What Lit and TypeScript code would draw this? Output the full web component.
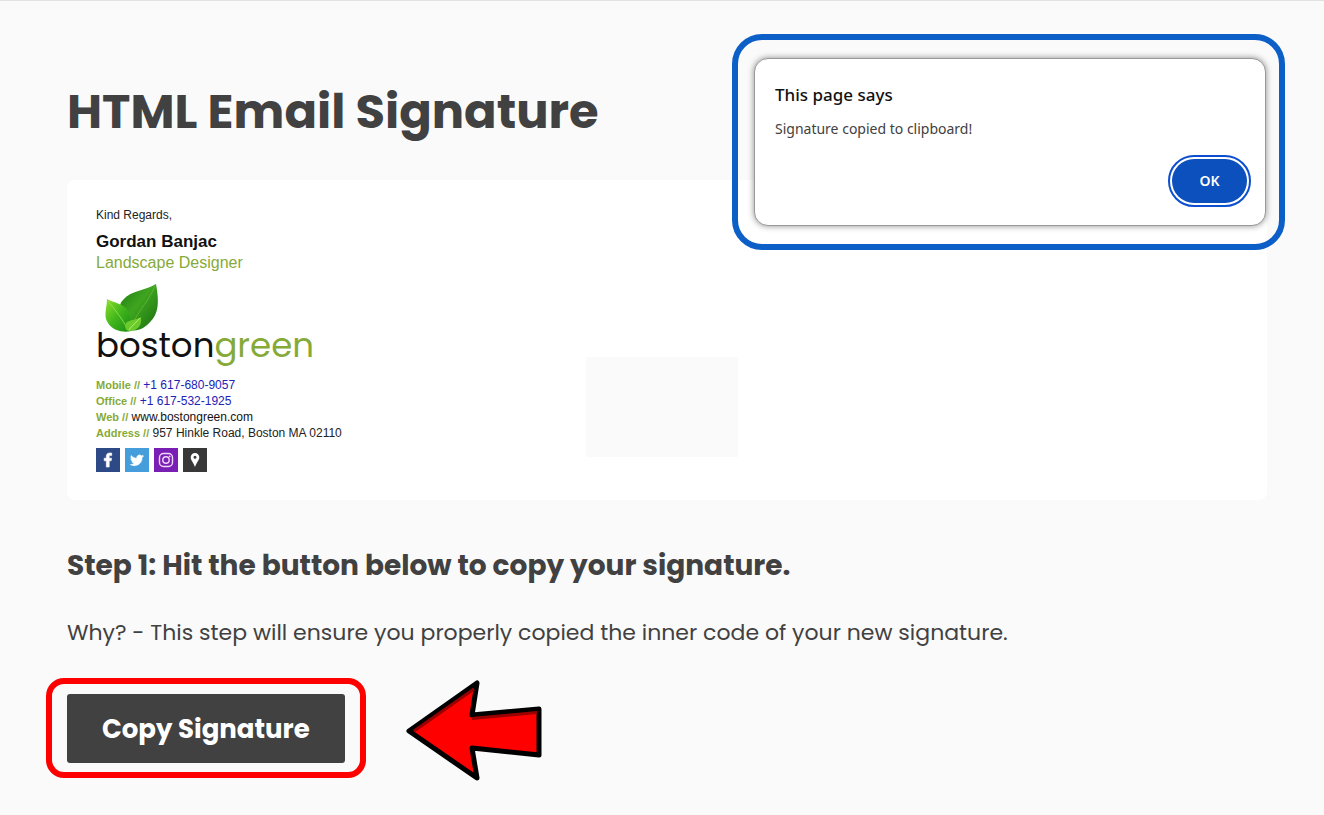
import { LitElement, html, css } from "lit";
import { customElement, state } from "lit/decorators.js";

@customElement("email-signature")
class EmailSignature extends LitElement {
  static styles = css`
    :host {
      display: block;
      font-family: "Liberation Sans", Arial, sans-serif;
      font-size: 12px;
      line-height: 16px;
      color: #222;
    }
    p {
      margin: 0;
    }
    .regards {
      margin-bottom: 8px;
    }
    .name,
    .role {
      font-size: 17px;
      line-height: 21px;
    }
    .name {
      font-weight: 700;
      color: #111;
    }
    .role {
      font-size: 16px;
    }
    .role,
    .label {
      color: #86aa38;
    }
    .logo {
      display: flex;
      flex-direction: column;
      margin: 10px 0 12px;
    }
    .leaves {
      display: block;
      width: 56px;
      height: 50px;
      margin-left: 6px;
    }
    .brand {
      font-family: Poppins, Inter, sans-serif;
      font-size: 34px;
      font-weight: 400;
      line-height: 40px;
      margin-top: -8px;
      color: #111;
    }
    .brand span {
      color: #86aa38;
    }
    .label {
      font-size: 11px;
      font-weight: 700;
    }
    a {
      color: #111;
      text-decoration: none;
    }
    .phone {
      color: #2222b8;
    }
    .social {
      display: flex;
      gap: 5px;
      margin-top: 7px;
    }
    .social svg {
      display: block;
      width: 24px;
      height: 24px;
    }
  `;

  render() {
    return html`
      <p class="regards">Kind Regards,</p>
      <p class="name">Gordan Banjac</p>
      <p class="role">Landscape Designer</p>
      <div class="logo">
        <svg class="leaves" viewBox="0 0 56 50" aria-hidden="true">
          <defs>
            <linearGradient id="big" x1="0" y1="0" x2="1" y2="1">
              <stop offset="0" stop-color="#1d7a12" />
              <stop offset="0.45" stop-color="#3fa51f" />
              <stop offset="1" stop-color="#176c10" />
            </linearGradient>
            <linearGradient id="mid" x1="0" y1="0" x2="1" y2="1">
              <stop offset="0" stop-color="#8ee02a" />
              <stop offset="0.5" stop-color="#3fb51c" />
              <stop offset="1" stop-color="#1c8c12" />
            </linearGradient>
          </defs>
          <path d="M54 1C57 17 57 30 49 38C43 45 36 49 28 47C21 37 14 23 21 17C29 7 43 8 54 1Z" fill="url(#big)" />
          <path d="M53 3C47 17 38 26 29 43" fill="none" stroke="#6fbb3b" stroke-width="0.7" />
          <path d="M5 16C14 21 27 21 28 34L29 48C22 50 11 48 6 40C1 33 5 25 5 16Z" fill="url(#mid)" />
          <path d="M6 18C13 27 20 35 26 47" fill="none" stroke="#a3e05a" stroke-width="0.8" />
          <path d="M39 34C33 38 25 36 23 42C23 46 25 48 28 48C36 47 40 43 39 34Z" fill="#6ccb2c" />
          <path d="M38 35C34 40 30 42 27 47" fill="none" stroke="#c5f387" stroke-width="0.8" />
        </svg>
        <div class="brand">boston<span>green</span></div>
      </div>
      <div class="details">
        <p><span class="label">Mobile //</span> <a class="phone" href="tel:+16176809057">+1 617-680-9057</a></p>
        <p><span class="label">Office //</span> <a class="phone" href="tel:+16175321925">+1 617-532-1925</a></p>
        <p><span class="label">Web //</span> <a href="#web">www.bostongreen.com</a></p>
        <p><span class="label">Address //</span> 957 Hinkle Road, Boston MA 02110</p>
      </div>
      <div class="social">
        <a href="#facebook" aria-label="Facebook">
          <svg viewBox="0 0 24 24">
            <rect width="24" height="24" fill="#2d4a86" />
            <path d="M10.3 19v-6.2H8.2v-2.6h2.1V8.4C10.300 6.100 11.600 5 13.700 5h2v2.600h-1.300c-1 0-1.200.5-1.200 1.200v1.400h2.400l-.4 2.600h-2V19z" fill="#fff" stroke="#fff" stroke-width="0.6" />
          </svg>
        </a>
        <a href="#twitter" aria-label="Twitter">
          <svg viewBox="0 0 24 24">
            <rect width="24" height="24" fill="#459edb" />
            <path d="M18.500 8.200c-.5.2-1 .4-1.500.4.500-.3 1-.8 1.100-1.400-.5.300-1.100.5-1.700.6a2.700 2.700 0 0 0-4.600 2.500C9.500 10.200 7.500 9.100 6.200 7.500c-.7 1.200-.4 2.800.8 3.600-.4 0-.8-.1-1.200-.3 0 1.300.9 2.400 2.200 2.700-.4.100-.8.100-1.200 0 .3 1.100 1.300 1.900 2.500 1.900A5.500 5.500 0 0 1 5.200 16.500c4.800 3 12 .3 11.900-6.900.6-.4 1-.9 1.400-1.400z" fill="#fff" stroke="#fff" stroke-width="0.5" />
          </svg>
        </a>
        <a href="#instagram" aria-label="Instagram">
          <svg viewBox="0 0 24 24">
            <rect width="24" height="24" fill="#7a1fb4" />
            <g fill="none" stroke="#f0d8fa" stroke-width="1.400">
              <rect x="5.500" y="5.500" width="13" height="13" rx="4" />
              <circle cx="12" cy="12" r="3.200" />
            </g>
            <circle cx="15.700" cy="8.300" r="0.900" fill="#f0d8fa" />
          </svg>
        </a>
        <a href="#map" aria-label="Location">
          <svg viewBox="0 0 24 24">
            <rect width="24" height="24" fill="#383838" />
            <path d="M12 5a4.300 4.300 0 0 0-4.300 4.300C7.700 12.500 10.500 14.500 12 19c1.500-4.500 4.300-6.500 4.300-9.700A4.300 4.300 0 0 0 12 5zm0 2.700a1.500 1.500 0 1 1 0 3 1.500 1.500 0 0 1 0-3z" fill="#fff" fill-rule="evenodd" />
          </svg>
        </a>
      </div>
    `;
  }
}

@customElement("app-root")
class AppRoot extends LitElement {
  @state() private open = true;

  static styles = css`
    :host {
      display: block;
      position: relative;
      box-sizing: border-box;
      min-height: 100vh;
      border-top: 1px solid #e2e2e2;
      background: #fafafa;
      color: #414141;
      font-family: Poppins, Inter, sans-serif;
    }
    * {
      box-sizing: border-box;
    }
    main {
      padding: 75px 57px 31px 67px;
    }
    h1,
    h2,
    p {
      margin: 0;
    }
    h1 {
      font-size: 48px;
      font-weight: 700;
      line-height: 72px;
    }
    .card {
      display: grid;
      grid-template-columns: 49fr 152px 50fr;
      min-height: 320px;
      margin-top: 32px;
      padding: 27px 29px;
      border-radius: 8px;
      background: #fff;
    }
    .placeholder {
      height: 100px;
      margin-top: 150px;
      background: #fafafa;
    }
    h2 {
      margin-top: 45px;
      font-size: 28px;
      font-weight: 700;
      line-height: 42px;
    }
    .why {
      margin-top: 28px;
      font-size: 22px;
      line-height: 36px;
    }
    .action {
      display: flex;
      align-items: flex-start;
      gap: 39px;
      margin: 27px 0 0 -21px;
    }
    .highlight {
      padding: 10px 15px 9px;
      border: 6px solid #f00;
      border-radius: 18px;
    }
    .copy {
      display: block;
      height: 69px;
      padding: 0 35px;
      border: 0;
      border-radius: 3px;
      background: #414141;
      color: #fff;
      font: 700 26px/40px Poppins, Inter, sans-serif;
      cursor: pointer;
    }
    .arrow {
      display: block;
      width: 138px;
      height: 104px;
    }
    .callout {
      position: absolute;
      top: 33px;
      right: 39px;
      width: 553px;
      padding: 18px 13px 18px 16px;
      border: 6px solid #0d5fc8;
      border-radius: 30px;
    }
    .dialog {
      display: flex;
      flex-direction: column;
      height: 168px;
      padding: 24px 18px 20px 20px;
      border: 1px solid #999;
      border-radius: 14px;
      background: #fff;
      box-shadow: 0 0 6px rgba(0, 0, 0, 0.45);
      font-family: "Segoe UI", "Noto Sans", sans-serif;
    }
    .title {
      font-size: 17px;
      font-weight: 500;
      line-height: 24px;
      color: #111;
    }
    .message {
      margin-top: 10px;
      font-size: 14px;
      line-height: 24px;
    }
    .ok {
      align-self: flex-end;
      width: 75px;
      height: 44px;
      margin-top: 18px;
      padding: 0;
      border: 0;
      border-radius: 22px;
      outline: 2px solid #0b4fd0;
      outline-offset: 2px;
      background: #0b50bd;
      color: #fff;
      font: 600 14px/20px "Segoe UI", "Noto Sans", sans-serif;
      cursor: pointer;
    }
  `;

  render() {
    return html`
      <main>
        <h1>HTML Email Signature</h1>
        <section class="card">
          <email-signature></email-signature>
          <div class="placeholder"></div>
        </section>
        <h2>Step 1: Hit the button below to copy your signature.</h2>
        <p class="why">Why? - This step will ensure you properly copied the inner code of your new signature.</p>
        <div class="action">
          <div class="highlight">
            <button class="copy" type="button" @click=${() => (this.open = true)}>Copy Signature</button>
          </div>
          <svg class="arrow" viewBox="0 -1 138 104" aria-hidden="true">
            <path d="M4 52L72 4L67 36L134 30V76L67 69L72 99Z" fill="#f00" stroke="#000" stroke-width="5" stroke-linejoin="round" />
            <path d="M9 52L69 10M67 39.500L132 33.500" fill="none" stroke="#900" stroke-width="3" />
          </svg>
        </div>
      </main>
      ${this.open
        ? html`
            <div class="callout">
              <div class="dialog" role="alertdialog" aria-labelledby="title" aria-describedby="message">
                <p class="title" id="title">This page says</p>
                <p class="message" id="message">Signature copied to clipboard!</p>
                <button class="ok" type="button" @click=${() => (this.open = false)}>OK</button>
              </div>
            </div>
          `
        : null}
    `;
  }
}
